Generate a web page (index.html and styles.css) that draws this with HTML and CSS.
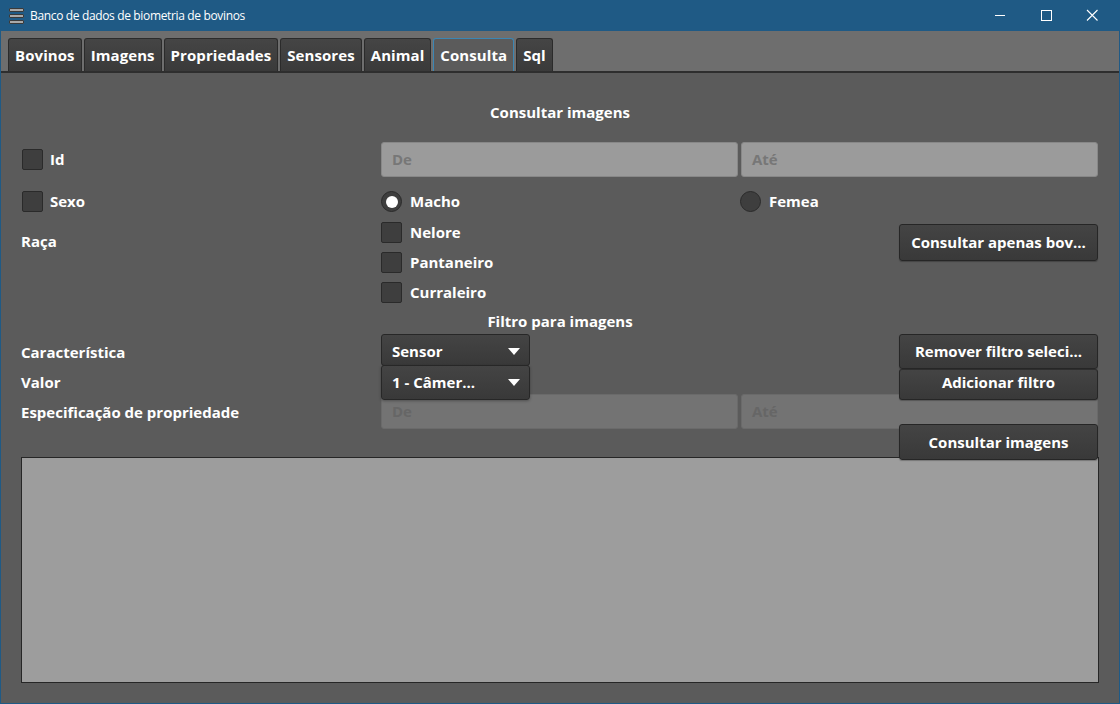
FILE: index.html
```html
<!DOCTYPE html>
<html lang="pt">
<head>
<meta charset="utf-8">
<title>Banco de dados de biometria de bovinos</title>
<link rel="stylesheet" href="styles.css">
</head>
<body>
<div class="window">
  <div class="titlebar">
    <div class="app-icon">
      <span class="bar"></span><span class="bar"></span><span class="bar"></span>
    </div>
    <div class="title">Banco de dados de biometria de bovinos</div>
    <div class="controls">
      <svg class="ctl" width="46" height="31" viewBox="0 0 46 31"><path d="M18 15.5h10" stroke="#fff" stroke-width="1"/></svg>
      <svg class="ctl" width="46" height="31" viewBox="0 0 46 31"><rect x="18.5" y="10.5" width="10" height="10" fill="none" stroke="#fff" stroke-width="1"/></svg>
      <svg class="ctl" width="46" height="31" viewBox="0 0 46 31"><path d="M18 10l10.5 10.5M28.5 10L18 20.5" stroke="#fff" stroke-width="1.1"/></svg>
    </div>
  </div>
  <div class="frame">
    <div class="tabs">
      <div class="tab">Bovinos</div>
      <div class="tab">Imagens</div>
      <div class="tab">Propriedades</div>
      <div class="tab">Sensores</div>
      <div class="tab">Animal</div>
      <div class="tab active">Consulta</div>
      <div class="tab">Sql</div>
    </div>
    <div class="content">
      <div class="heading first">Consultar imagens</div>

      <div class="row row-id">
        <label class="check lead"><span class="box"></span><span class="txt">Id</span></label>
        <div class="field">De</div>
        <div class="field">Até</div>
      </div>

      <div class="row row-sexo">
        <label class="check lead"><span class="box"></span><span class="txt">Sexo</span></label>
        <label class="check"><span class="radio on"></span><span class="txt">Macho</span></label>
        <label class="check femea"><span class="radio"></span><span class="txt">Femea</span></label>
      </div>

      <div class="row row-raca">
        <div class="label raca-label">Raça</div>
        <div class="checklist">
          <label class="check"><span class="box"></span><span class="txt">Nelore</span></label>
          <label class="check"><span class="box"></span><span class="txt">Pantaneiro</span></label>
          <label class="check"><span class="box"></span><span class="txt">Curraleiro</span></label>
        </div>
        <div class="btn raca-btn">Consultar apenas bov...</div>
      </div>

      <div class="heading second">Filtro para imagens</div>

      <div class="row row-filtro">
        <div class="labels">
          <div class="label">Característica</div>
          <div class="label">Valor</div>
          <div class="label">Especificação de propriedade</div>
        </div>
        <div class="col2">
          <div class="combo c1"><span>Sensor</span><span class="arrow"></span></div>
          <div class="combo c2"><span>1 - Câmer...</span><span class="arrow"></span></div>
          <div class="field disabled">De</div>
        </div>
        <div class="col3">
          <div class="field disabled ate">Até</div>
          <div class="btnstack">
            <div class="btn b1">Remover filtro seleci...</div>
            <div class="btn b2">Adicionar filtro</div>
            <div class="btn b3">Consultar imagens</div>
          </div>
        </div>
      </div>

      <div class="results"></div>
    </div>
  </div>
</div>
</body>
</html>
```
FILE: styles.css
```css
* { box-sizing: border-box; }
html, body { margin: 0; padding: 0; }
body {
  width: 1120px;
  height: 704px;
  overflow: hidden;
  font-family: "Open Sans", "Noto Sans", sans-serif;
  background: #5b5b5b;
}
.window {
  width: 1120px;
  height: 704px;
  display: flex;
  flex-direction: column;
  background: #1f5a85;
}
.titlebar {
  height: 31px;
  display: flex;
  align-items: center;
  background: #1f5a85;
  color: #fff;
  flex: none;
}
.app-icon {
  width: 15px;
  margin-left: 9px;
  display: flex;
  flex-direction: column;
  gap: 2px;
}
.app-icon .bar {
  display: block;
  height: 4px;
  background: #a9a9a9;
  border: 1px solid #3a3a3a;
  border-radius: 1px;
}
.title {
  margin-left: 6px;
  font-size: 12px;
  letter-spacing: -0.35px;
  flex: 1;
  padding-bottom: 1px;
}
.controls { display: flex; margin-right: 5px; }
.controls .ctl { display: block; }
.frame {
  flex: 1;
  margin: 0 1px 1px 1px;
  background: #5b5b5b;
  display: flex;
  flex-direction: column;
}
.tabs {
  height: 42px;
  background: #6e6e6e;
  border-bottom: 2px solid #2e2e2e;
  display: flex;
  align-items: flex-end;
  padding-left: 7px;
  gap: 2px;
  flex: none;
}
.tab {
  height: 33px;
  padding: 0 6px;
  background: linear-gradient(#454545, #3a3a3a);
  border: 1px solid #2b2b2b;
  border-bottom: none;
  border-radius: 3px 3px 0 0;
  color: #fff;
  font-weight: 700;
  font-size: 15px;
  line-height: 32px;
  letter-spacing: 0.08px;
}
.tab.active {
  background: #5b5b5b;
  border-color: #3b86b4;
}
.content {
  flex: 1;
  padding: 0 20px 0 20px;
  color: #fff;
  font-weight: 700;
  font-size: 15px;
}
.heading {
  text-align: center;
  line-height: 18px;
  height: 20px;
}
.heading.first { margin-top: 30px; }
.heading.second { margin-top: 9px; }
.row {
  display: grid;
  grid-template-columns: 360px 360px 357px;
}
.row > :nth-child(2) { width: 357px; }
.row-id { margin-top: 19px; height: 35px; align-items: center; }
.row-sexo { margin-top: 14px; height: 21px; align-items: center; }
.row-raca { margin-top: 10px; }
.check {
  display: flex;
  align-items: center;
  gap: 8px;
  height: 21px;
  line-height: 20px;
}
.check .txt { margin-top: -2px; }
.check.lead { padding-left: 1px; gap: 7px; }
.check.femea { margin-left: -1px; }
.box {
  width: 21px;
  height: 21px;
  background: #3e3e3e;
  border: 1px solid #2a2a2a;
  border-radius: 2px;
  flex: none;
}
.radio {
  width: 21px;
  height: 21px;
  border-radius: 50%;
  background: #3e3e3e;
  border: 1px solid #2a2a2a;
  flex: none;
  display: flex;
  align-items: center;
  justify-content: center;
}
.radio.on::after {
  content: "";
  width: 12px;
  height: 12px;
  border-radius: 50%;
  background: #fff;
}
.field {
  height: 35px;
  background: #9b9b9b;
  border: 1px solid #888;
  border-radius: 3px;
  color: #777;
  line-height: 32px;
  padding-left: 10px;
}
.field.disabled {
  background: #737373;
  border-color: #6a6a6a;
  color: #666;
}
.checklist {
  display: flex;
  flex-direction: column;
  gap: 9px;
}
.label { line-height: 20px; }
.raca-label { margin-top: 9px; }
.btn {
  width: 199px;
  background: linear-gradient(#444, #393939);
  border: 1px solid #262626;
  border-radius: 3px;
  color: #fff;
  text-align: center;
  box-shadow: 0 1px 1px rgba(0,0,0,0.25);
}
.raca-btn {
  justify-self: end;
  align-self: start;
  margin-top: 2px;
  height: 37px;
  line-height: 34px;
}
.row-filtro { margin-top: 2px; }
.labels { padding-top: 3px; }
.labels .label { line-height: 30px; height: 30px; }
.col2 { display: flex; flex-direction: column; }
.combo {
  width: 149px;
  background: linear-gradient(#444, #393939);
  border: 1px solid #272727;
  border-radius: 3px;
  display: flex;
  align-items: center;
  justify-content: space-between;
  padding: 0 9px 0 10px;
  position: relative;
  z-index: 1;
}
.combo.c1 { height: 32px; padding-top: 1px; }
.combo.c2 { height: 35px; margin-top: -1px; padding-bottom: 1px; box-shadow: 0 1px 3px rgba(0,0,0,0.3); }
.arrow {
  width: 0;
  height: 0;
  border-left: 6px solid transparent;
  border-right: 6px solid transparent;
  border-top: 7px solid #fff;
  margin-top: 1px;
}
.col2 .field.disabled { margin-top: -6px; }
.col3 { display: grid; }
.col3 > * { grid-area: 1 / 1; }
.col3 .ate { margin-top: 60px; }
.btnstack {
  justify-self: end;
  display: flex;
  flex-direction: column;
  position: relative;
  z-index: 2;
}
.b1 { height: 35px; line-height: 33px; }
.b2 { height: 31px; line-height: 24px; border-top-color: #2e2e2e; }
.b3 { height: 36px; line-height: 34px; margin-top: 24px; }
.results {
  margin-top: -3px;
  width: 1078px;
  height: 226px;
  background: #9d9d9d;
  border: 1px solid #262626;
}
```
